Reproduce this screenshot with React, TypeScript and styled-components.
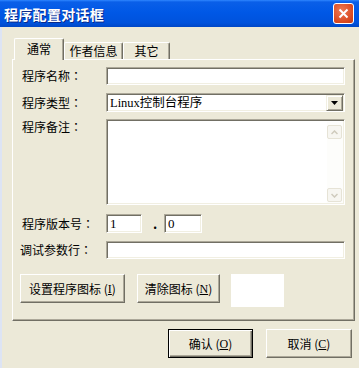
import React from 'react'
import styled, { createGlobalStyle } from 'styled-components'

const GlobalStyle = createGlobalStyle`
    html, body {
        margin: 0;
        padding: 0;
        background: #ece9d8;
    }
    body {
        font-family: "Noto Sans CJK SC", "Liberation Sans", sans-serif;
        font-size: 12px;
        color: #000;
    }
`

const Window = styled.div`
    width: 359px;
    height: 368px;
    display: flex;
    flex-direction: column;
    background: #ece9d8;
    overflow: hidden;
`

const TitleBar = styled.div`
    height: 27px;
    flex: none;
    display: flex;
    align-items: center;
    justify-content: space-between;
    padding: 0 5px 0 4px;
    background: linear-gradient(
        #2f86ff 0,
        #0a5fe8 2px,
        #0058e6 45%,
        #0052dc 85%,
        #0047c6 100%
    );
`

const Title = styled.span`
    color: #fff;
    font-size: 14px;
    font-weight: bold;
    letter-spacing: 0.3px;
    line-height: 16px;
    text-shadow: 1px 1px 0 #0a2a8a;
`

const CloseButton = styled.div`
    width: 19px;
    height: 19px;
    border: 1px solid #fff;
    border-radius: 3px;
    background: radial-gradient(circle at 40% 35%, #ee7a55 0, #d9481f 70%, #c23c17 100%);
    display: flex;
    align-items: center;
    justify-content: center;
`

const Body = styled.div`
    flex: 1;
    display: flex;
    flex-direction: column;
    padding: 11px 6px 0 10px;
    border-left: 2px solid #dde4f4;
    box-sizing: border-box;
`

const TabStrip = styled.div`
    display: flex;
    align-items: flex-end;
    height: 21px;
    padding-left: 2px;
    position: relative;
    z-index: 1;
`

const Tab = styled.div<{ $active?: boolean; $w: number }>`
    box-sizing: border-box;
    width: ${(p) => p.$w}px;
    height: ${(p) => (p.$active ? '22px' : '17px')};
    margin-bottom: ${(p) => (p.$active ? '-1px' : '0')};
    background: #ece9d8;
    border-top: 1px solid #fff;
    border-left: 1px solid #fff;
    border-right: 1px solid #716f64;
    border-top-left-radius: 2px;
    border-top-right-radius: 2px;
    box-shadow: inset -1px 0 0 #aca899;
    display: flex;
    align-items: ${(p) => (p.$active ? 'flex-start' : 'center')};
    padding-top: ${(p) => (p.$active ? '2px' : '0')};
    justify-content: center;
    line-height: 16px;
`

const Panel = styled.div`
    box-sizing: border-box;
    width: 343px;
    height: 262px;
    border-top: 1px solid #fff;
    border-left: 1px solid #fff;
    border-right: 1px solid #716f64;
    border-bottom: 1px solid #716f64;
    box-shadow: inset -1px -1px 0 #aca899;
    padding: 7px 9px 0 7px;
    display: flex;
    flex-direction: column;
`

const Row = styled.div<{ $top: number; $align?: string }>`
    display: flex;
    align-items: ${(p) => p.$align || 'center'};
    margin-top: ${(p) => p.$top}px;
`

const Label = styled.div<{ $pad?: number }>`
    width: 86px;
    flex: none;
    box-sizing: border-box;
    padding-left: ${(p) => p.$pad ?? 2}px;
    line-height: 14px;
    white-space: nowrap;
`

// centred full-width colon, as in the old bitmap font
const Colon = styled.span`
    font-family: "Noto Sans CJK TC", "Noto Sans CJK SC", sans-serif;
`

const Sunken = styled.div<{ $w?: number; $h: number }>`
    box-sizing: border-box;
    ${(p) => (p.$w ? `width: ${p.$w}px; flex: none;` : 'flex: 1;')}
    height: ${(p) => p.$h}px;
    background: #fff;
    border-top: 1px solid #aca899;
    border-left: 1px solid #aca899;
    border-right: 1px solid #fff;
    border-bottom: 1px solid #fff;
    box-shadow: inset 1px 1px 0 #716f64, inset -1px -1px 0 #f1efe2;
    display: flex;
    align-items: center;
    font-family: "Liberation Serif", "Noto Sans CJK SC", serif;
    font-size: 13px;
    padding-left: 3px;
    line-height: 14px;
    overflow: hidden;
`

const SelectText = styled.span`
    flex: 1;
    font-family: "Liberation Serif", "Noto Sans CJK SC", serif;
    font-size: 12.5px;
`

const DropButton = styled.div`
    box-sizing: border-box;
    width: 17px;
    height: 16px;
    margin-right: 1px;
    background: #ece9d8;
    border-top: 1px solid #f1efe2;
    border-left: 1px solid #f1efe2;
    border-right: 1px solid #716f64;
    border-bottom: 1px solid #716f64;
    box-shadow: inset 1px 1px 0 #fff, inset -1px -1px 0 #aca899;
    display: flex;
    align-items: center;
    justify-content: center;
`

const Memo = styled.div`
    box-sizing: border-box;
    flex: 1;
    height: 86px;
    background: #fff;
    border-top: 1px solid #aca899;
    border-left: 1px solid #aca899;
    border-right: 1px solid #fff;
    border-bottom: 1px solid #fff;
    box-shadow: inset 1px 1px 0 #716f64, inset -1px -1px 0 #f1efe2;
    display: flex;
    justify-content: flex-end;
    padding: 2px 1px 1px 2px;
`

const ScrollBar = styled.div`
    width: 16px;
    display: flex;
    flex-direction: column;
    justify-content: space-between;
    padding: 3px 0 1px;
    background: #fdfdfb;
`

const ScrollArrow = styled.div`
    box-sizing: border-box;
    width: 15px;
    height: 14px;
    border: 1px solid #e6e3d6;
    border-radius: 2px;
    background: #f7f6f1;
    display: flex;
    align-items: center;
    justify-content: center;
`

const Dot = styled.span`
    width: 10px;
    text-align: center;
    font-weight: bold;
    font-size: 13px;
    margin: 0 4px 0 8px;
`

const ButtonRow = styled.div`
    display: flex;
    align-items: flex-start;
    margin-top: 15px;
    gap: 12px;
`

const Button = styled.button<{ $w: number; $default?: boolean }>`
    box-sizing: border-box;
    width: ${(p) => p.$w}px;
    height: 29px;
    padding: 0;
    margin: 0;
    background: #ece9d8;
    font-family: "Noto Sans CJK SC", "Liberation Sans", sans-serif;
    font-size: 12px;
    color: #000;
    line-height: 14px;
    border: 1px solid;
    border-color: ${(p) => (p.$default ? '#000' : '#fff #716f64 #716f64 #fff')};
    box-shadow: ${(p) =>
        p.$default
            ? 'inset 1px 1px 0 #fff, inset -1px -1px 0 #716f64, inset -2px -2px 0 #aca899'
            : 'inset -1px -1px 0 #aca899'};
    display: flex;
    align-items: center;
    justify-content: center;
    white-space: nowrap;

    u {
        font-family: "Liberation Serif", serif;
    }
`

const IconBox = styled.div`
    width: 53px;
    height: 33px;
    margin-left: -1px;
    background: #fff;
`

const Footer = styled.div`
    display: flex;
    justify-content: flex-end;
    gap: 13px;
    padding: 8px 1px 0 0;
`

export default function App() {
    return (
        <Window>
            <GlobalStyle />
            <TitleBar>
                <Title>程序配置对话框</Title>
                <CloseButton>
                    <svg width="11" height="11" viewBox="0 0 11 11">
                        <path d="M1.5 1.5 L9.5 9.5 M9.5 1.5 L1.5 9.5" stroke="#fff" strokeWidth="2" />
                    </svg>
                </CloseButton>
            </TitleBar>
            <Body>
                <TabStrip>
                    <Tab $active $w={50}>通常</Tab>
                    <Tab $w={59}>作者信息</Tab>
                    <Tab $w={47}>其它</Tab>
                </TabStrip>
                <Panel>
                    <Row $top={0}>
                        <Label>程序名称<Colon>：</Colon></Label>
                        <Sunken $h={18} />
                    </Row>
                    <Row $top={8}>
                        <Label>程序类型<Colon>：</Colon></Label>
                        <Sunken $h={19}>
                            <SelectText>Linux控制台程序</SelectText>
                            <DropButton>
                                <svg width="7" height="4" viewBox="0 0 7 4">
                                    <path d="M0 0 H7 L3.5 4 Z" fill="#000" />
                                </svg>
                            </DropButton>
                        </Sunken>
                    </Row>
                    <Row $top={7} $align="flex-start">
                        <Label style={{ paddingTop: 1 }}>程序备注<Colon>：</Colon></Label>
                        <Memo>
                            <ScrollBar>
                                <ScrollArrow>
                                    <svg width="7" height="5" viewBox="0 0 7 5">
                                        <path d="M0.5 4 L3.5 1 L6.5 4" stroke="#cfcbbd" strokeWidth="1.5" fill="none" />
                                    </svg>
                                </ScrollArrow>
                                <ScrollArrow>
                                    <svg width="7" height="5" viewBox="0 0 7 5">
                                        <path d="M0.5 1 L3.5 4 L6.5 1" stroke="#cfcbbd" strokeWidth="1.5" fill="none" />
                                    </svg>
                                </ScrollArrow>
                            </ScrollBar>
                        </Memo>
                    </Row>
                    <Row $top={9}>
                        <Label>程序版本号<Colon>：</Colon></Label>
                        <Sunken $w={36} $h={19}>1</Sunken>
                        <Dot>.</Dot>
                        <Sunken $w={38} $h={19}>0</Sunken>
                    </Row>
                    <Row $top={8}>
                        <Label $pad={0}>调试参数行<Colon>：</Colon></Label>
                        <Sunken $h={18} />
                    </Row>
                    <ButtonRow>
                        <Button $w={105}>
                            设置程序图标 (<u>I</u>)
                        </Button>
                        <Button $w={83}>
                            清除图标 (<u>N</u>)
                        </Button>
                        <IconBox />
                    </ButtonRow>
                </Panel>
                <Footer>
                    <Button $w={85} $default>
                        确认 (<u>O</u>)
                    </Button>
                    <Button $w={86}>
                        取消 (<u>C</u>)
                    </Button>
                </Footer>
            </Body>
        </Window>
    )
}
